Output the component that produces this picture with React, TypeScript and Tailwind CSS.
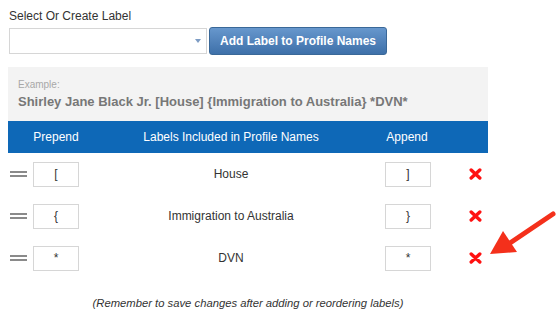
import React from 'react';

const rows = [
  { pre: '[', label: 'House', post: ']' },
  { pre: '{', label: 'Immigration to Australia', post: '}' },
  { pre: '*', label: 'DVN', post: '*' },
];

function DragHandle() {
  return (
    <div className="ml-[2px] flex w-[17px] flex-col gap-[2px]">
      <div className="h-[2px] bg-[#8a8a8a]" />
      <div className="h-[2px] bg-[#8a8a8a]" />
    </div>
  );
}

function Cross() {
  return (
    <svg width="13" height="12" viewBox="0 0 13 12">
      <path d="M2.2 2 L10.8 10 M10.8 2 L2.2 10" stroke="#ff1010" strokeWidth="3.4" strokeLinecap="round" />
    </svg>
  );
}

function AffixInput({ value }: { value: string }) {
  return (
    <input
      readOnly
      value={value}
      className="h-[25px] w-[46px] border border-[#d6d6d6] bg-white text-center text-[12px] text-[#333] outline-none"
    />
  );
}

export default function App() {
  return (
    <div className="relative h-[322px] w-[559px] overflow-hidden bg-white font-['Liberation_Sans',Arial,sans-serif] text-[#333]">
      <div className="w-[488px] pl-2 pt-[9px]">
        {/* Label picker */}
        <div className="pl-px text-[12px] leading-[14px]">Select Or Create Label</div>
        <div className="mt-[4px] flex items-center gap-[2px]">
          <div className="ml-px flex h-[26px] w-[198px] items-center justify-end border border-[#d6d6d6] bg-white pr-[5px]">
            <div className="h-0 w-0 border-x-[3px] border-t-[4px] border-x-transparent border-t-[#7d9cc4]" />
          </div>
          <button className="h-[28px] w-[178px] rounded-[3px] border border-[#3a6898] bg-gradient-to-b from-[#6797cd] to-[#3e70a9] text-[12px] font-bold text-white">
            Add Label to Profile Names
          </button>
        </div>

        {/* Example */}
        <div className="mt-[12px] h-[54px] bg-[#f3f3f3] pl-[10px] pt-[12px]">
          <div className="text-[10px] leading-[12px] text-[#a8a8a8]">Example:</div>
          <div className="mt-[3px] text-[13px] font-bold leading-[15px] text-[#777]">
            Shirley Jane Black Jr. [House] {'{'}Immigration to Australia{'}'} *DVN*
          </div>
        </div>

        {/* Table */}
        <div className="flex h-[32px] items-center bg-[#0e68b7] text-[12px] text-white">
          <div className="w-[96px] text-center">Prepend</div>
          <div className="w-[254px] text-center">Labels Included in Profile Names</div>
          <div className="w-[98px] text-center">Append</div>
          <div className="w-[32px]" />
        </div>
        {rows.map((r) => (
          <div key={r.label} className="flex h-[42px] items-center text-[12px]">
            <div className="flex w-[96px] items-center">
              <DragHandle />
              <div className="ml-[6px]">
                <AffixInput value={r.pre} />
              </div>
            </div>
            <div className="w-[254px] text-center">{r.label}</div>
            <div className="flex w-[98px] justify-center pl-[2px]">
              <AffixInput value={r.post} />
            </div>
            <div className="flex w-[32px] justify-center pl-[6px]">
              <Cross />
            </div>
          </div>
        ))}

        <div className="mt-[17px] text-center text-[11.25px] italic leading-[14px] text-[#333]">
          (Remember to save changes after adding or reordering labels)
        </div>
      </div>

      {/* Annotation arrow */}
      <svg className="absolute left-[485px] top-[205px]" width="74" height="60" viewBox="0 0 74 60">
        <line x1="68" y1="9" x2="25" y2="38" stroke="#f4301b" strokeWidth="5" strokeLinecap="round" />
        <polygon points="5,49 18,26 32,47" fill="#f4301b" />
      </svg>
    </div>
  );
}
